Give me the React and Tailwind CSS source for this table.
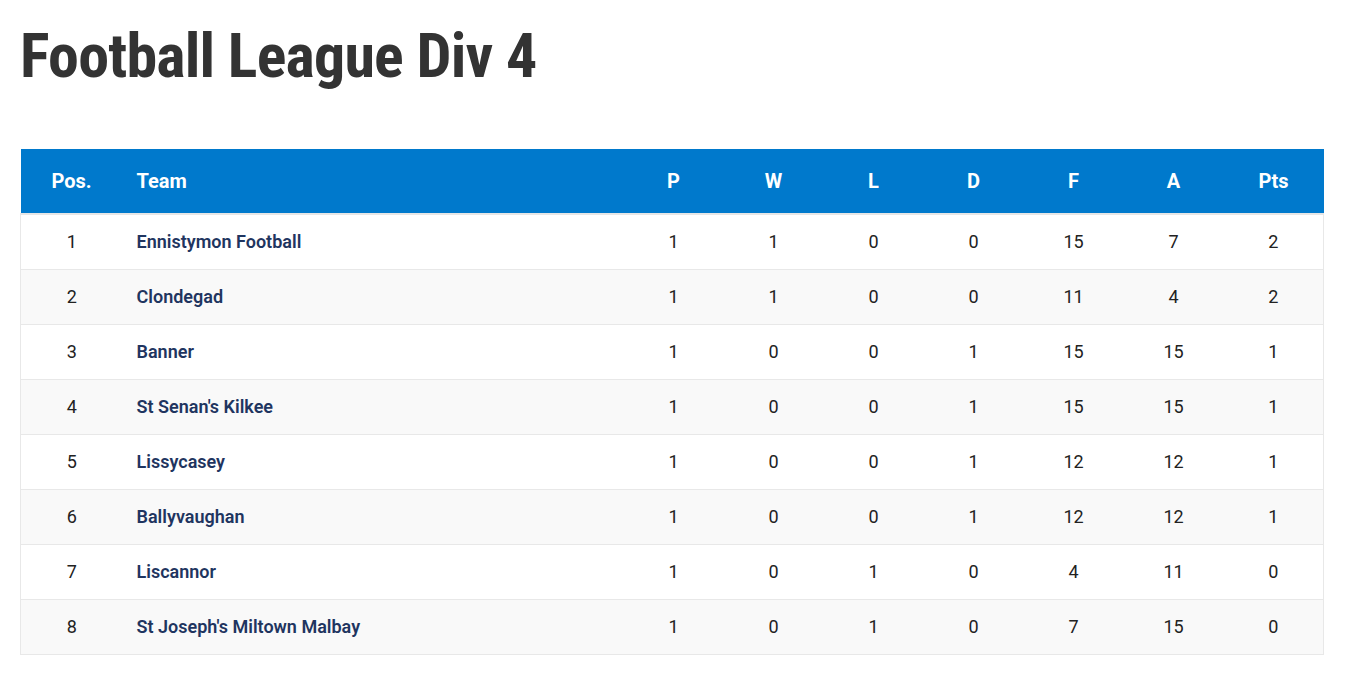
import React from "react";

const rows = [
  [1, "Ennistymon Football", 1, 1, 0, 0, 15, 7, 2],
  [2, "Clondegad", 1, 1, 0, 0, 11, 4, 2],
  [3, "Banner", 1, 0, 0, 1, 15, 15, 1],
  [4, "St Senan's Kilkee", 1, 0, 0, 1, 15, 15, 1],
  [5, "Lissycasey", 1, 0, 0, 1, 12, 12, 1],
  [6, "Ballyvaughan", 1, 0, 0, 1, 12, 12, 1],
  [7, "Liscannor", 1, 0, 1, 0, 4, 11, 0],
  [8, "St Joseph's Miltown Malbay", 1, 0, 1, 0, 7, 15, 0],
];

const stats = ["P", "W", "L", "D", "F", "A", "Pts"];

function App() {
  return (
    <div className="min-h-screen bg-white px-5 pt-[22px] font-['Roboto','Liberation_Sans',sans-serif]">
      {/* title */}
      <h1 className="text-[62px] leading-[68px] font-bold text-[#333333] tracking-[-0.8px] font-['Roboto_Condensed','Liberation_Sans_Narrow','DejaVu_Sans_Condensed','Roboto',sans-serif] [font-stretch:condensed]">
        Football League Div 4
      </h1>

      <table className="mt-[59px] w-[1304px] border-collapse">
        <thead>
          <tr className="bg-[#0079cc] text-white text-[20px] font-bold h-[65px] border-b-2 border-[#e6e6e6]">
            <th className="w-[102px] text-center font-bold">Pos.</th>
            <th className="text-left pl-[14px] font-bold">Team</th>
            {stats.map((s) => (
              <th key={s} className="w-[100px] text-center font-bold">
                {s}
              </th>
            ))}
          </tr>
        </thead>
        <tbody>
          {rows.map((r, i) => (
            <tr
              key={r[0]}
              className={
                "h-[55px] border border-[#e8e8e8] text-[18px] text-[#222222] " +
                (i % 2 === 1 ? "bg-[#f9f9f9]" : "bg-white")
              }
            >
              <td className="text-center">{r[0]}</td>
              <td className="pl-[14px] font-semibold text-[#1f3560]">{r[1]}</td>
              {r.slice(2).map((v, j) => (
                <td key={j} className="text-center">
                  {v}
                </td>
              ))}
            </tr>
          ))}
        </tbody>
      </table>
    </div>
  );
}

export default App;
